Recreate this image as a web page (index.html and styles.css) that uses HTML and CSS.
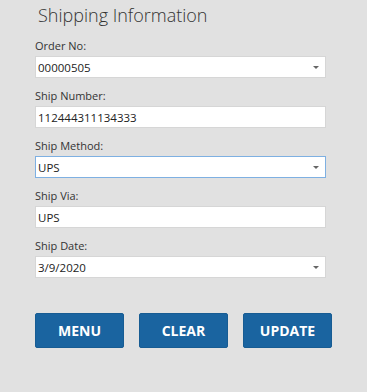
FILE: index.html
```html
<!DOCTYPE html>
<html lang="en">
<head>
  <meta charset="UTF-8" />
  <title>Shipping Information</title>
  <link rel="stylesheet" href="styles.css">
</head>
<body>
  <div class="page">
    <h1>Shipping Information</h1>

    <div class="field">
      <label>Order No:</label>
      <div class="box combo"><span>00000505</span><span class="arrow"></span></div>
    </div>
    <div class="field">
      <label>Ship Number:</label>
      <div class="box"><span>112444311134333</span></div>
    </div>
    <div class="field">
      <label>Ship Method:</label>
      <div class="box combo focused"><span>UPS</span><span class="arrow"></span></div>
    </div>
    <div class="field">
      <label>Ship Via:</label>
      <div class="box"><span>UPS</span></div>
    </div>
    <div class="field">
      <label>Ship Date:</label>
      <div class="box combo"><span>3/9/2020</span><span class="arrow"></span></div>
    </div>

    <div class="buttons">
      <button type="button">MENU</button>
      <button type="button">CLEAR</button>
      <button type="button">UPDATE</button>
    </div>
  </div>
</body>
</html>
```

FILE: styles.css
```css
body {
  margin: 0;
  background: #e1e1e1;
  font-family: 'Open Sans', sans-serif;
  color: #333;
}

.page {
  width: 291px;
  padding: 0 0 0 35px;
}

h1 {
  margin: 0;
  padding: 3px 0 0 3px;
  height: 35px;
  font-size: 18px;
  font-weight: 300;
  color: #333;
  line-height: 24px;
}

.field {
  margin-bottom: 10px;
}

label {
  display: block;
  font-size: 11px;
  line-height: 16px;
  margin-bottom: 2px;
  color: #333;
}

.box {
  box-sizing: border-box;
  height: 22px;
  background: #fff;
  border: 1px solid #d6d6d6;
  display: flex;
  align-items: center;
  justify-content: space-between;
  padding: 0 5px 0 2px;
  font-size: 11.5px;
  color: #222;
}

.box.focused {
  border-color: #7eb0e2;
}

.arrow {
  width: 0;
  height: 0;
  border-left: 3px solid transparent;
  border-right: 3px solid transparent;
  border-top: 3px solid #666;
  margin-right: 1px;
}

.buttons {
  display: flex;
  gap: 15px;
  width: 297px;
  margin-top: 35px;
}

button {
  flex: 0 0 89px;
  height: 35px;
  background: #1a64a0;
  color: #fff;
  border: 1px solid #175c93;
  border-radius: 2px;
  font-family: 'Open Sans', sans-serif;
  font-weight: 700;
  font-size: 14px;
  padding: 0;
}
```
